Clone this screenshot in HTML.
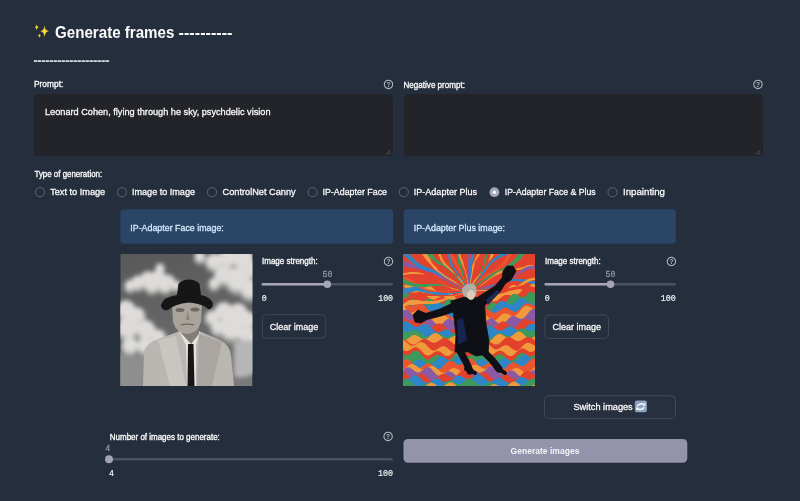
<!DOCTYPE html>
<html><head><meta charset="utf-8">
<style>
html,body{margin:0;padding:0;background:#252e3d;width:800px;height:501px;overflow:hidden}
svg{display:block;will-change:transform}
text{font-family:"Liberation Sans",sans-serif}
.lbl{font-size:8.7px;fill:#fafafa;stroke:#fafafa;stroke-width:0.32px}
.rad{font-size:9.6px;fill:#fafafa;stroke:#fafafa;stroke-width:0.28px}
.mono{font-family:"Liberation Mono",monospace}
</style></head>
<body>
<svg width="800" height="501" viewBox="0 0 800 501">
<defs>
  <g id="help"><circle cx="0" cy="0" r="4.2" fill="none" stroke="#b3b7c1" stroke-width="1.05"/><text x="0" y="2.4" text-anchor="middle" style="font-size:6.6px;font-weight:bold;fill:#b3b7c1">?</text></g>
</defs>
<rect width="800" height="501" fill="#252e3d"/>

<!-- title -->
<g fill="#f6d43e">
  <path d="M44.5 25 Q44.8 30.7 48.9 31.2 Q44.8 31.7 44.5 37.5 Q44.2 31.7 40.3 31.2 Q44.2 30.7 44.5 25Z"/>
  <path d="M36.7 24.3 Q36.9 27 38.6 27.3 Q36.9 27.6 36.7 30.2 Q36.5 27.6 34.8 27.3 Q36.5 27 36.7 24.3Z"/>
  <path d="M39.4 33.4 Q39.6 35.4 41.1 35.6 Q39.6 35.8 39.4 37.9 Q39.2 35.8 37.7 35.6 Q39.2 35.4 39.4 33.4Z"/>
</g>
<text x="55" y="38" textLength="119.4" lengthAdjust="spacingAndGlyphs" style="font-size:16px;font-weight:bold;fill:#fafafa">Generate frames</text>
<text x="178.6" y="38" textLength="53.9" lengthAdjust="spacingAndGlyphs" style="font-size:16px;font-weight:bold;fill:#fafafa">----------</text>
<rect x="33.9" y="60.2" width="75.4" height="1.8" fill="url(#dash)"/>
<defs><pattern id="dash" x="33.9" y="0" width="3.99" height="10" patternUnits="userSpaceOnUse"><rect x="0" y="0" width="3.4" height="10" fill="#d6d8de"/></pattern></defs>

<!-- prompt -->
<text class="lbl" x="34" y="87.4" textLength="29.3" lengthAdjust="spacingAndGlyphs">Prompt:</text>
<use href="#help" x="388.5" y="84.4"/>
<rect x="34" y="94" width="359" height="62" rx="4" fill="#232429"/>
<text class="rad" x="45" y="115" textLength="225.5" lengthAdjust="spacingAndGlyphs">Leonard Cohen, flying through he sky, psychdelic vision</text>
<path d="M386 154.5 L390.5 150 M388.5 154.5 L390.5 152.5" stroke="#6a6e78" stroke-width="0.7"/>

<text class="lbl" x="403.5" y="87.6" textLength="61.5" lengthAdjust="spacingAndGlyphs">Negative prompt:</text>
<use href="#help" x="758" y="84.4"/>
<rect x="404" y="94" width="359" height="62" rx="4" fill="#232429"/>
<path d="M756 154.5 L760.5 150 M758.5 154.5 L760.5 152.5" stroke="#6a6e78" stroke-width="0.7"/>

<!-- type of generation -->
<text class="lbl" x="34.5" y="177" textLength="67.7" lengthAdjust="spacingAndGlyphs">Type of generation:</text>
<g fill="none" stroke="#5d6373" stroke-width="1">
  <circle cx="40" cy="192.2" r="4.6"/>
  <circle cx="122" cy="192.2" r="4.6"/>
  <circle cx="212" cy="192.2" r="4.6"/>
  <circle cx="312.5" cy="192.2" r="4.6"/>
  <circle cx="403.8" cy="192.2" r="4.6"/>
  <circle cx="612.5" cy="192.2" r="4.6"/>
</g>
<circle cx="494.4" cy="192.2" r="4.9" fill="#a4a4ba"/>
<circle cx="494.4" cy="192.2" r="1.7" fill="#ffffff"/>
<text class="rad" x="50.2" y="195.3" textLength="55" lengthAdjust="spacingAndGlyphs">Text to Image</text>
<text class="rad" x="132" y="195.3" textLength="63" lengthAdjust="spacingAndGlyphs">Image to Image</text>
<text class="rad" x="222.5" y="195.3" textLength="73.2" lengthAdjust="spacingAndGlyphs">ControlNet Canny</text>
<text class="rad" x="322.5" y="195.3" textLength="64.5" lengthAdjust="spacingAndGlyphs">IP-Adapter Face</text>
<text class="rad" x="413.8" y="195.3" textLength="63.2" lengthAdjust="spacingAndGlyphs">IP-Adapter Plus</text>
<text class="rad" x="504.8" y="195.3" textLength="90.8" lengthAdjust="spacingAndGlyphs">IP-Adapter Face &amp; Plus</text>
<text class="rad" x="623" y="195.3" textLength="42" lengthAdjust="spacingAndGlyphs">Inpainting</text>

<!-- info boxes -->
<rect x="120.3" y="209.3" width="272.8" height="34.4" rx="3.5" fill="#2a4566"/>
<text x="130.3" y="230.5" textLength="93.5" lengthAdjust="spacingAndGlyphs" style="font-size:9.4px;fill:#d2ebfd;stroke:#d2ebfd;stroke-width:0.28px">IP-Adapter Face image:</text>
<rect x="403.8" y="209.3" width="272" height="34.4" rx="3.5" fill="#2a4566"/>
<text x="413.7" y="230.5" textLength="91.3" lengthAdjust="spacingAndGlyphs" style="font-size:9.4px;fill:#d2ebfd;stroke:#d2ebfd;stroke-width:0.28px">IP-Adapter Plus image:</text>

<!-- IMAGE 1 placeholder -->
<g id="img1">
  <clipPath id="c1"><rect x="120.3" y="254" width="132.2" height="132"/></clipPath>
  <filter id="blur1" x="-30%" y="-30%" width="160%" height="160%"><feGaussianBlur stdDeviation="2"/></filter>
  <filter id="blur2" x="-20%" y="-20%" width="140%" height="140%"><feGaussianBlur stdDeviation="0.6"/></filter>
  <linearGradient id="sky" x1="0" y1="0" x2="0.2" y2="1"><stop offset="0" stop-color="#595959"/><stop offset="0.6" stop-color="#666666"/><stop offset="1" stop-color="#7a7a7a"/></linearGradient>
  <g clip-path="url(#c1)">
    <rect x="120.3" y="254" width="132.2" height="132" fill="url(#sky)"/>
    <g filter="url(#blur1)">
      <g fill="#a0a09f"><circle cx="138" cy="285" r="7.6"/><circle cx="148" cy="282" r="9.0"/><circle cx="158" cy="281" r="9.0"/><circle cx="168" cy="284" r="7.6"/><circle cx="176" cy="288" r="5.2"/><circle cx="130" cy="288" r="6.0"/><circle cx="152" cy="288" r="7.6"/><circle cx="160" cy="271" r="5.2"/><circle cx="165" cy="288" r="7.6"/><circle cx="214" cy="264" r="9.0"/><circle cx="228" cy="260" r="10.6"/><circle cx="243" cy="261" r="12.0"/><circle cx="252" cy="272" r="9.0"/><circle cx="224" cy="277" r="10.6"/><circle cx="238" cy="282" r="13.6"/><circle cx="250" cy="292" r="10.6"/><circle cx="214" cy="286" r="6.0"/><circle cx="200" cy="259" r="6.0"/><circle cx="212" cy="320" r="7.6"/><circle cx="224" cy="314" r="10.6"/><circle cx="238" cy="315" r="10.6"/><circle cx="248" cy="322" r="9.0"/><circle cx="232" cy="330" r="13.6"/><circle cx="248" cy="338" r="10.6"/><circle cx="218" cy="330" r="7.6"/><circle cx="126" cy="312" r="10.6"/><circle cx="137" cy="318" r="9.0"/><circle cx="128" cy="330" r="12.0"/><circle cx="146" cy="332" r="10.6"/><circle cx="158" cy="340" r="9.0"/><circle cx="145" cy="348" r="9.0"/><circle cx="130" cy="348" r="9.0"/><circle cx="166" cy="348" r="7.6"/></g>
      <g fill="#dddcda"><circle cx="138" cy="282" r="6.6"/><circle cx="148" cy="279" r="7.8"/><circle cx="158" cy="278" r="7.8"/><circle cx="168" cy="281" r="6.6"/><circle cx="176" cy="285" r="4.5"/><circle cx="130" cy="285" r="5.2"/><circle cx="152" cy="285" r="6.6"/><circle cx="160" cy="268" r="4.5"/><circle cx="165" cy="285" r="6.6"/><circle cx="214" cy="261" r="7.8"/><circle cx="228" cy="257" r="9.0"/><circle cx="243" cy="258" r="10.4"/><circle cx="252" cy="269" r="7.8"/><circle cx="224" cy="274" r="9.0"/><circle cx="238" cy="279" r="11.6"/><circle cx="250" cy="289" r="9.0"/><circle cx="214" cy="283" r="5.2"/><circle cx="200" cy="256" r="5.2"/><circle cx="212" cy="317" r="6.6"/><circle cx="224" cy="311" r="9.0"/><circle cx="238" cy="312" r="9.0"/><circle cx="248" cy="319" r="7.8"/><circle cx="232" cy="327" r="11.6"/><circle cx="248" cy="335" r="9.0"/><circle cx="218" cy="327" r="6.6"/><circle cx="126" cy="309" r="9.0"/><circle cx="137" cy="315" r="7.8"/><circle cx="128" cy="327" r="10.4"/><circle cx="146" cy="329" r="9.0"/><circle cx="158" cy="337" r="7.8"/><circle cx="145" cy="345" r="7.8"/><circle cx="130" cy="345" r="7.8"/><circle cx="166" cy="345" r="6.6"/></g>
      <path d="M234 342 Q245 338 256 342 L256 372 Q245 380 234 376Z" fill="#b6b6b6"/>
      <path d="M116 352 Q130 358 146 356 L146 390 L116 390Z" fill="#8e8e8e"/>
    </g>
    <g filter="url(#blur2)">
      <!-- suit -->
      <path d="M143 386 L144 352 Q146 343 158 339 L180 331 L199 331 L220 340 Q230 345 231 356 L234 386 Z" fill="#bab6b1"/>
      <path d="M158 340 L176 336 L186 386 L170 386 Z" fill="#c9c5c0"/>
      <path d="M199 334 L222 342 L212 386 L197 386 Z" fill="#aaa5a0"/>
      <path d="M179 331 L186 345 L187 386 L196 386 L196 345 L200 332 Z" fill="#e6e4e0"/>
      <path d="M188 344 L193.5 344 L194.5 386 L187.5 386 Z" fill="#181818"/>
      <!-- neck / face -->
      <path d="M179 318 L199 318 L199 334 L191 344 L181 333 Z" fill="#857e78"/>
      <path d="M172 304 Q175 300 187 300 Q200 300 202 306 L201 322 Q198 333 187 334 Q176 333 173 322 Z" fill="#aaa39c"/>
      <ellipse cx="180" cy="310" rx="4.5" ry="2" fill="#6d6762"/><ellipse cx="195" cy="309.5" rx="4.5" ry="2" fill="#6d6762"/>
      <path d="M187.5 311 L186 320 L190 320Z" fill="#8a847e"/>
      <path d="M181 325 Q187 323 194 325" stroke="#5e5954" stroke-width="1.1" fill="none"/>
      
      
      <!-- hat -->
      <path d="M161 305 Q163 297 177 295 L178.5 284 Q182 279.5 189 279.5 Q196 279.5 199.5 284 L201 295 Q211 297 213 304 Q212 310 208 309 Q204 304 189 302.5 Q174 304 168 310 Q161 311 161 305 Z" fill="#141414"/>
    </g>
  </g>
</g>
<!-- IMAGE 2 placeholder -->
<g id="img2">
  <clipPath id="c2"><rect x="403" y="254" width="132" height="132"/></clipPath>
  <filter id="wav" x="0" y="0" width="1" height="1" filterUnits="objectBoundingBox"><feTurbulence type="fractalNoise" baseFrequency="0.03 0.045" numOctaves="3" seed="11" result="t"/><feDisplacementMap in="SourceGraphic" in2="t" scale="34" xChannelSelector="R" yChannelSelector="G"/></filter>
  <radialGradient id="rg" cx="468" cy="288" r="26" fx="468" fy="288" gradientUnits="userSpaceOnUse" spreadMethod="repeat" gradientTransform="translate(468 288) scale(1.1 0.9) translate(-468 -288)">
    <stop offset="0" stop-color="#e5402c"/><stop offset="0.22" stop-color="#e5402c"/>
    <stop offset="0.22" stop-color="#f0953a"/><stop offset="0.40" stop-color="#f0953a"/>
    <stop offset="0.40" stop-color="#e84a30"/><stop offset="0.52" stop-color="#e84a30"/>
    <stop offset="0.52" stop-color="#3b9a58"/><stop offset="0.64" stop-color="#3b9a58"/>
    <stop offset="0.64" stop-color="#2d84c4"/><stop offset="0.82" stop-color="#2d84c4"/>
    <stop offset="0.82" stop-color="#8658a2"/><stop offset="1" stop-color="#8658a2"/>
  </radialGradient>
  <g clip-path="url(#c2)">
    <g id="bands"><clipPath id="topc"><path d="M400 250 L540 250 L540 345 Q500 318 468 300 Q436 318 400 345Z"/></clipPath><rect x="403" y="254" width="132" height="132" fill="#e2412d"/>
<path d="M401 287.1L404 285.4L407 283.9L410 284.1L413 286.1L416 288.5L419 289.8L422 289.1L425 287.2L428 285.8L431 286.3L434 288.7L437 291.8L440 293.9L443 294.1L446 293.1L449 292.6L452 293.8L455 296.9L458 300.4L461 302.6L464 302.6L467 301.3L470 299.2L473 298.3L476 299.0L479 300.1L482 299.8L485 297.5L488 293.9L491 290.9L494 289.7L497 290.4L500 291.7L503 291.8L506 290.0L509 287.3L512 285.1L515 284.9L518 286.5L521 288.6L524 289.3L527 288.0L530 285.4L533 283.2L536 282.8L538 390L401 390Z" fill="#f09a3c"/>
<path d="M401 284.6L404 286.6L407 289.5L410 292.0L413 292.8L416 292.4L419 291.7L422 292.3L425 294.4L428 297.2L431 299.3L434 299.7L437 298.5L440 297.2L443 297.0L446 298.4L449 300.5L452 302.0L455 301.9L458 300.5L461 299.2L464 299.2L467 301.0L470 302.8L473 303.5L476 302.8L479 300.7L482 298.7L485 298.1L488 299.0L491 300.6L494 301.5L497 300.7L500 298.4L503 295.9L506 294.7L509 294.9L512 295.8L515 295.9L518 294.3L521 291.4L524 288.5L527 287.0L530 287.2L533 288.2L536 288.6L538 390L401 390Z" fill="#e2412d"/>
<path d="M401 295.5L404 294.0L407 293.2L410 294.7L413 298.3L416 302.1L419 304.0L422 303.1L425 300.5L428 298.7L431 299.1L434 301.5L437 304.3L440 305.2L443 303.5L446 300.7L449 298.8L452 299.5L455 302.6L458 306.1L461 308.0L464 307.5L467 305.8L470 304.2L473 304.7L476 307.3L479 310.1L482 310.8L485 308.9L488 305.6L491 302.9L494 302.6L497 304.1L500 305.7L503 305.3L506 302.2L509 297.9L512 294.6L515 293.8L518 295.3L521 297.0L524 297.0L527 294.7L530 291.3L533 289.2L536 289.6L538 390L401 390Z" fill="#3d9a5a"/>
<path d="M401 301.0L404 304.0L407 305.3L410 304.2L413 301.8L416 300.1L419 300.4L422 302.5L425 304.9L428 305.8L431 304.5L434 302.2L437 300.9L440 301.9L443 304.9L446 308.3L449 310.1L452 309.8L455 308.5L458 308.0L461 309.6L464 313.0L467 316.3L470 317.1L473 315.1L476 311.8L479 309.3L482 308.7L485 309.9L488 311.0L491 310.5L494 307.7L497 304.0L500 301.2L503 300.8L506 302.3L509 304.0L512 304.2L515 302.4L518 299.6L521 298.0L524 298.5L527 300.9L530 303.2L533 303.8L536 302.0L538 390L401 390Z" fill="#2e86c6"/>
<path d="M401 299.1L404 300.7L407 303.4L410 305.5L413 305.6L416 304.1L419 302.8L422 303.2L425 305.9L428 309.5L431 312.2L434 312.8L437 311.6L440 310.3L443 310.5L446 312.7L449 315.6L452 317.4L455 317.0L458 314.8L461 312.6L464 312.0L467 313.5L470 315.3L473 315.8L476 314.3L479 311.3L482 308.6L485 307.7L488 309.1L491 311.5L494 312.9L497 312.3L500 310.1L503 307.9L506 307.5L509 308.9L512 311.1L515 312.1L518 310.8L521 307.7L524 304.6L527 303.2L530 303.8L533 305.1L536 305.3L538 390L401 390Z" fill="#ea5530"/>
<path d="M401 303.6L404 306.5L407 310.1L410 312.4L413 312.4L416 310.9L419 310.0L422 311.0L425 314.1L428 317.5L431 319.3L434 318.6L437 316.3L440 314.3L443 314.3L446 316.3L449 318.8L452 319.8L455 318.4L458 315.7L461 313.8L464 314.1L467 316.7L470 319.2L473 320.1L476 318.8L479 316.2L482 314.2L485 314.5L488 316.9L491 319.6L494 320.6L497 319.2L500 316.2L503 313.7L506 313.2L509 314.5L512 316.2L515 316.1L518 313.6L521 309.8L524 306.6L527 305.8L530 307.1L533 308.8L536 309.2L538 390L401 390Z" fill="#f09a3c"/>
<path d="M401 312.4L404 310.2L407 309.6L410 311.5L413 315.3L416 318.7L419 320.2L422 319.2L425 317.5L428 316.9L431 318.7L434 321.9L437 324.6L440 325.0L443 323.0L446 320.1L449 318.5L452 319.3L455 321.7L458 323.9L461 324.0L464 321.9L467 319.4L470 317.8L473 318.6L476 321.2L479 323.5L482 323.8L485 321.9L488 319.4L491 318.3L494 319.6L497 322.3L500 324.5L503 324.2L506 321.6L509 318.2L512 316.1L515 316.3L518 317.9L521 319.0L524 317.9L527 314.6L530 310.8L533 308.7L536 309.2L538 390L401 390Z" fill="#8a5aa5"/>
<path d="M401 314.8L404 317.3L407 319.8L410 320.5L413 319.3L416 317.3L419 316.6L422 318.2L425 321.7L428 325.1L431 326.6L434 325.7L437 324.0L440 323.3L443 324.6L446 327.6L449 330.1L452 330.5L455 328.6L458 325.8L461 324.1L464 324.7L467 327.0L470 328.6L473 328.0L476 325.5L479 322.3L482 320.5L485 321.2L488 323.7L491 326.0L494 326.5L497 324.9L500 322.5L503 321.3L506 322.3L509 324.9L512 326.9L515 326.8L518 324.4L521 321.1L524 318.9L527 318.9L530 320.4L533 321.6L536 320.7L538 390L401 390Z" fill="#e2412d"/>
<path d="M401 323.3L404 321.3L407 321.3L410 323.2L413 325.6L416 326.9L419 326.2L422 324.4L425 323.4L428 324.4L431 327.2L434 330.4L437 332.3L440 332.0L443 330.4L446 329.3L449 329.9L452 332.2L455 334.7L458 335.6L461 334.3L464 331.7L467 329.8L470 329.3L473 330.4L476 331.8L479 331.9L482 330.1L485 327.3L488 325.3L491 325.4L494 327.5L497 329.8L500 330.8L503 329.8L506 327.7L509 326.2L512 326.6L515 328.6L518 330.6L521 331.1L524 329.3L527 326.3L530 323.9L533 323.4L536 324.5L538 390L401 390Z" fill="#2e86c6"/>
<path d="M401 329.1L404 331.4L407 332.3L410 331.5L413 330.3L416 330.1L419 331.6L422 334.2L425 336.5L428 337.0L431 335.7L434 333.9L437 332.9L440 333.7L443 335.5L446 337.0L449 336.8L452 335.0L455 332.9L458 331.9L461 332.8L464 335.0L467 337.0L470 337.1L473 335.5L476 333.6L479 332.9L482 334.0L485 336.2L488 338.0L491 338.1L494 336.5L497 334.4L500 333.2L503 333.8L506 335.3L509 336.2L512 335.5L515 333.1L518 330.3L521 328.6L524 328.8L527 330.2L530 331.2L533 330.7L536 328.8L538 390L401 390Z" fill="#3d9a5a"/>
<path d="M401 338.9L404 340.3L407 339.4L410 337.0L413 335.0L416 334.9L419 336.7L422 338.8L425 339.4L428 337.8L431 335.0L434 332.9L437 333.0L440 335.2L443 337.9L446 339.4L449 338.7L452 336.9L455 335.8L458 336.9L461 339.9L464 343.2L467 344.9L470 343.9L473 341.3L476 339.3L479 339.1L482 340.8L485 342.6L488 342.7L491 340.5L494 337.1L497 334.4L500 333.8L503 335.3L506 337.1L509 337.6L512 335.9L515 333.3L518 331.6L521 332.1L524 334.6L527 337.4L530 338.6L533 337.5L536 335.2L538 390L401 390Z" fill="#f09a3c"/>
<path d="M401 338.8L404 339.0L407 340.9L410 343.5L413 344.8L416 344.1L419 341.8L422 339.6L425 338.9L428 340.1L431 342.0L434 343.0L437 342.1L440 339.9L443 338.0L446 337.9L449 339.9L452 342.6L455 344.5L458 344.4L461 343.0L464 341.9L467 342.4L470 344.4L473 346.8L476 348.0L479 347.1L482 344.7L485 342.4L488 341.6L491 342.6L494 344.2L497 344.5L500 343.0L503 340.1L506 337.6L509 336.9L512 338.2L515 340.2L518 341.2L521 340.4L524 338.4L527 336.9L530 337.1L533 339.1L536 341.7L538 390L401 390Z" fill="#e2412d"/>
<path d="M401 339.7L404 340.3L407 342.8L410 345.2L413 345.9L416 344.5L419 342.5L422 341.9L425 343.6L428 346.8L431 349.8L434 350.7L437 349.4L440 347.2L443 346.1L446 347.1L449 349.5L452 351.4L455 351.3L458 348.9L461 345.8L464 344.0L467 344.5L470 346.5L473 348.2L476 348.0L479 345.9L482 343.3L485 342.1L488 343.5L491 346.4L494 349.0L497 349.6L500 348.1L503 345.9L506 345.0L509 346.2L512 348.7L515 350.6L518 350.4L521 347.8L524 344.6L527 342.7L530 343.0L533 344.7L536 346.1L538 390L401 390Z" fill="#f09a3c"/>
<path d="M401 348.0L404 350.5L407 351.3L410 350.1L413 348.0L416 347.1L419 348.5L422 351.6L425 354.7L428 355.8L431 354.6L434 352.3L437 350.9L440 351.6L443 353.9L446 355.9L449 355.9L452 353.6L455 350.5L458 348.4L461 348.7L464 350.7L467 352.7L470 352.9L473 351.0L476 348.5L479 347.2L482 348.3L485 351.3L488 354.0L491 355.0L494 353.7L497 351.5L500 350.4L503 351.5L506 354.0L509 356.1L512 356.1L515 353.8L518 350.6L521 348.5L524 348.6L527 350.4L530 351.9L533 351.5L536 349.2L538 390L401 390Z" fill="#e2412d"/>
<path d="M401 352.3L404 354.8L407 355.5L410 353.9L413 351.6L416 350.5L419 352.0L422 355.4L425 358.7L428 359.8L431 358.5L434 356.1L437 354.7L440 355.6L443 358.1L446 360.3L449 360.3L452 357.8L455 354.3L458 352.1L461 352.3L464 354.4L467 356.5L470 356.5L473 354.3L476 351.5L479 350.1L482 351.4L485 354.6L488 357.6L491 358.5L494 357.2L497 354.9L500 353.9L503 355.3L506 358.2L509 360.6L512 360.7L515 358.3L518 355.0L521 352.9L524 353.2L527 355.1L530 356.8L533 356.3L536 353.6L538 390L401 390Z" fill="#3d9a5a"/>
<path d="M401 356.7L404 359.9L407 363.0L410 364.2L413 363.0L416 360.6L419 359.2L422 360.0L425 362.4L428 364.6L431 364.6L434 362.3L437 358.8L440 356.5L443 356.6L446 358.5L449 360.5L452 360.6L455 358.6L458 355.8L461 354.4L464 355.5L467 358.6L470 361.6L473 362.7L476 361.5L479 359.4L482 358.4L485 359.7L488 362.6L491 365.1L494 365.4L497 363.2L500 360.0L503 358.0L506 358.2L509 360.2L512 361.8L515 361.5L518 359.0L521 355.9L524 354.2L527 355.1L530 357.8L533 360.5L536 361.2L538 390L401 390Z" fill="#2e86c6"/>
<path d="M401 362.8L404 360.3L407 359.1L410 360.4L413 363.6L416 366.8L419 368.0L422 366.8L425 364.5L428 363.1L431 364.0L434 366.6L437 368.8L440 368.9L443 366.5L446 363.1L449 360.8L452 360.9L455 362.8L458 364.7L461 364.7L464 362.6L467 359.7L470 358.2L473 359.3L476 362.4L479 365.4L482 366.4L485 365.2L488 363.1L491 362.2L494 363.5L497 366.5L500 369.1L503 369.5L506 367.4L509 364.2L512 362.2L515 362.5L518 364.5L521 366.2L524 365.8L527 363.3L530 360.0L533 358.2L536 359.1L538 390L401 390Z" fill="#ea5530"/>
<path d="M401 370.6L404 369.2L407 366.5L410 364.3L413 363.9L416 365.5L419 367.9L422 369.4L425 368.9L428 367.2L431 365.8L434 366.2L437 368.5L440 371.3L443 372.9L446 372.3L449 370.2L452 368.2L455 368.0L458 369.4L461 371.3L464 371.9L467 370.4L470 367.5L473 365.1L476 364.5L479 366.0L482 368.0L485 369.0L488 368.1L491 366.1L494 364.6L497 365.0L500 367.3L503 370.2L506 371.8L509 371.3L512 369.5L515 368.0L518 368.2L521 370.0L524 372.2L527 372.9L530 371.5L533 368.7L536 366.3L538 390L401 390Z" fill="#f09a3c"/>
<path d="M401 372.9L404 369.4L407 367.2L410 367.5L413 369.8L416 372.0L419 372.4L422 370.6L425 368.2L428 367.1L431 368.6L434 372.0L437 375.1L440 376.1L443 374.7L446 372.3L449 371.1L452 372.2L455 374.8L458 376.9L461 376.8L464 374.2L467 370.8L470 368.6L473 368.9L476 371.0L479 372.8L482 372.6L485 370.3L488 367.5L491 366.2L494 367.5L497 370.7L500 373.6L503 374.5L506 373.1L509 371.0L512 370.2L515 371.8L518 374.8L521 377.3L524 377.4L527 375.1L530 372.0L533 370.1L536 370.6L538 390L401 390Z" fill="#8a5aa5"/>
<path d="M401 369.7L404 371.3L407 374.3L410 376.8L413 377.2L416 375.6L419 373.8L422 373.4L425 375.3L428 378.3L431 380.4L434 380.2L437 377.8L440 375.0L443 373.7L446 374.5L449 376.5L452 377.7L455 376.8L458 374.0L461 371.0L464 369.8L467 371.1L470 373.8L473 375.8L476 375.9L479 374.1L482 372.2L485 372.0L488 374.1L491 377.4L494 379.8L497 379.8L500 377.7L503 375.4L506 374.5L509 375.7L512 378.0L515 379.2L518 378.2L521 375.2L524 372.1L527 370.8L530 371.8L533 374.1L536 375.7L538 390L401 390Z" fill="#e2412d"/>
<path d="M401 377.1L404 379.0L407 379.3L410 377.8L413 375.8L416 375.2L419 376.7L422 379.7L425 382.2L428 382.8L431 381.4L434 379.2L437 378.2L440 379.2L443 381.4L446 383.0L449 382.5L452 380.1L455 377.1L458 375.4L461 375.9L464 377.8L467 379.4L470 379.2L473 377.2L476 374.9L479 374.1L482 375.6L485 378.5L488 380.9L491 381.5L494 380.2L497 378.3L500 377.8L503 379.2L506 381.7L509 383.6L512 383.4L515 381.1L518 378.3L521 376.8L524 377.4L527 379.2L530 380.4L533 379.8L536 377.4L538 390L401 390Z" fill="#2e86c6"/>
<path d="M401 382.1L404 379.9L407 379.2L410 380.8L413 383.8L416 386.5L419 387.2L422 385.8L425 383.7L428 382.7L431 383.9L434 386.2L437 388.0L440 387.7L443 385.2L446 382.1L449 380.4L452 380.8L455 382.7L458 384.3L461 383.9L464 381.8L467 379.3L470 378.3L473 379.7L476 382.6L479 385.2L482 385.7L485 384.4L488 382.5L491 382.0L494 383.6L497 386.3L500 388.4L503 388.3L506 386.0L509 383.2L512 381.7L515 382.3L518 384.2L521 385.5L524 384.8L527 382.3L530 379.4L533 378.2L536 379.4L538 390L401 390Z" fill="#3d9a5a"/>
<path d="M401 391.0L404 389.1L407 386.9L410 386.1L413 387.3L416 389.5L419 390.7L422 389.8L425 386.9L428 383.9L431 382.6L434 383.6L437 385.7L440 387.2L443 386.7L446 384.5L449 382.5L452 382.2L455 384.2L458 387.4L461 389.6L464 389.8L467 388.1L470 386.2L473 385.9L476 387.6L479 390.2L482 391.7L485 390.8L488 388.1L491 385.2L494 384.0L497 385.0L500 386.9L503 388.0L506 387.0L509 384.4L512 382.0L515 381.5L518 383.3L521 386.2L524 388.3L527 388.3L530 386.6L533 384.9L536 385.0L538 390L401 390Z" fill="#f09a3c"/>
<path d="M401 391.1L404 390.6L407 388.5L410 386.3L413 385.5L416 386.8L419 389.3L422 391.4L425 391.7L428 390.4L431 388.8L434 388.5L437 390.1L440 392.7L443 394.5L446 394.3L449 392.3L452 390.0L455 388.9L458 389.6L461 391.3L464 392.3L467 391.5L470 389.1L473 386.6L476 385.6L479 386.7L482 388.9L485 390.6L488 390.6L491 389.1L494 387.5L497 387.3L500 389.1L503 391.9L506 393.9L509 393.9L512 392.2L515 390.2L518 389.5L521 390.6L524 392.5L527 393.6L530 392.7L533 390.2L536 387.6L538 390L401 390Z" fill="#e2412d"/>
<g clip-path="url(#topc)"><path d="M462 294L458 295L453 297L448 299L444 301L439 303L434 304L429 304L424 304L419 304L413 305L408 305L404 307L399 309L395 313L391 317L387 320L383 324L378 326L373 327L368 327L362 325L356 323L351 321L345 320L340 320L335 323L331 327L328 332L324 338L321 344L317 348L313 351L309 339L313 336L317 332L321 326L325 321L329 316L333 312L338 310L343 310L349 312L354 314L360 317L365 319L371 320L376 319L380 317L385 314L389 310L393 307L398 304L403 302L408 300L413 300L418 300L423 301L428 301L433 301L438 300L443 299L448 298L453 296L457 294L462 293Z" fill="#f09a3c"/>
<path d="M462 293L457 295L452 296L447 296L442 297L437 296L432 296L427 296L422 296L417 297L412 299L408 301L403 304L399 307L394 310L389 311L384 312L379 311L374 309L368 306L363 304L357 302L352 302L348 304L343 307L338 312L334 317L330 322L326 326L321 328L316 328L311 325L305 321L303 310L309 315L314 318L319 318L324 317L329 313L333 308L337 303L342 298L347 295L352 294L357 295L362 297L367 300L373 303L378 305L383 306L388 306L393 305L398 302L402 300L407 297L412 295L417 293L422 293L427 293L432 294L437 294L442 295L447 295L452 295L457 294L462 293Z" fill="#e2412d"/>
<path d="M462 293L457 293L452 294L447 295L442 295L437 295L432 294L427 293L422 292L417 291L412 292L407 293L402 295L397 297L392 300L388 302L383 303L378 303L373 302L367 300L362 297L357 294L352 292L347 291L342 291L337 294L332 297L327 302L323 307L318 310L313 312L308 312L303 310L302 296L307 299L312 300L317 298L322 295L327 291L332 286L337 283L342 281L348 281L352 282L357 285L362 288L367 292L372 295L377 296L382 296L387 295L392 293L397 291L402 289L407 288L412 287L417 287L422 288L427 289L432 291L437 292L442 293L447 293L452 293L457 292L462 292Z" fill="#2e86c6"/>
<path d="M462 291L457 291L452 291L447 291L442 292L437 292L432 292L427 291L422 289L417 286L413 284L408 281L403 280L398 279L393 280L388 283L382 286L377 289L372 292L367 293L362 292L357 289L352 284L348 279L343 273L339 269L334 267L329 267L324 270L318 275L312 282L307 288L302 292L302 284L307 280L313 274L319 268L325 263L331 261L336 260L340 263L344 267L348 273L353 279L357 284L362 287L367 288L372 287L377 285L383 282L388 279L393 277L399 276L404 277L409 278L413 281L418 284L422 287L427 289L432 290L437 291L442 291L447 290L452 290L457 290L462 291Z" fill="#ea5530"/>
<path d="M462 291L457 289L452 288L448 287L443 286L438 286L432 286L427 287L422 287L417 287L412 286L407 285L403 282L398 279L394 276L389 273L384 272L379 271L374 272L369 273L363 276L358 278L353 280L348 280L343 279L338 276L334 272L329 266L325 261L321 257L316 255L311 255L306 257L308 247L314 245L319 246L323 248L327 253L331 258L335 263L339 268L344 271L349 273L354 273L359 271L365 269L370 267L376 266L381 265L386 266L390 269L395 272L399 275L403 278L408 281L413 283L418 284L423 284L428 284L433 284L438 284L443 285L448 286L453 287L457 289L462 290Z" fill="#3d9a5a"/>
<path d="M462 291L457 290L452 289L448 287L443 285L439 282L434 280L430 277L425 275L420 274L415 274L410 274L404 275L399 276L394 276L389 275L384 273L380 270L376 265L372 260L368 256L364 252L360 250L354 250L349 252L343 254L336 258L331 260L325 262L320 261L316 258L312 252L309 245L310 240L313 247L317 252L321 256L326 257L332 255L338 253L344 250L350 247L356 246L361 246L366 249L370 252L373 257L377 262L381 267L385 270L389 273L394 274L399 274L405 273L410 272L416 272L421 273L426 274L430 276L435 279L439 281L443 284L448 286L453 288L457 289L462 291Z" fill="#f09a3c"/>
<path d="M462 290L457 289L453 288L448 287L443 285L438 283L434 281L430 278L425 275L421 272L417 269L412 268L407 268L401 268L395 269L390 270L385 271L380 270L375 267L371 263L367 258L364 253L361 248L357 244L353 241L347 241L341 242L335 245L329 249L322 252L317 253L312 253L308 249L311 239L315 242L320 243L325 242L332 240L338 236L345 234L351 233L356 234L360 236L364 241L367 246L370 252L373 257L377 261L381 264L386 265L392 265L397 265L403 264L408 264L414 264L418 266L423 269L427 272L431 275L435 278L439 281L443 284L448 286L453 287L458 288L462 290Z" fill="#e2412d"/>
<path d="M462 290L458 288L453 285L449 283L445 280L440 278L436 275L432 273L427 272L422 270L417 269L412 268L407 267L402 266L398 264L393 261L389 257L386 253L382 249L378 246L374 243L369 241L364 241L358 241L353 241L347 242L342 241L337 240L333 237L329 233L326 228L323 223L319 218L325 208L328 213L330 218L333 224L337 228L341 231L346 233L351 233L357 233L362 233L368 233L373 234L378 237L382 240L385 243L389 247L392 252L396 255L400 259L404 261L409 263L414 265L419 266L423 267L428 269L433 271L437 273L442 276L446 279L450 282L454 284L458 287L463 289Z" fill="#8a5aa5"/>
<path d="M463 289L459 286L455 283L450 280L446 278L442 276L437 274L432 272L427 271L422 269L418 267L414 264L410 261L406 257L403 253L400 249L396 245L392 242L387 240L382 239L377 238L371 239L365 239L360 238L355 236L351 233L348 228L345 222L343 216L341 211L338 206L334 203L329 202L335 192L340 194L344 198L347 202L349 208L350 214L353 220L356 225L359 228L364 231L369 232L375 232L380 232L386 233L391 234L396 237L400 240L403 244L406 248L409 253L412 257L416 261L420 264L424 266L429 268L434 270L438 272L443 274L447 276L451 279L455 282L459 285L463 289Z" fill="#2e86c6"/>
<path d="M463 288L459 285L455 283L450 280L446 278L442 275L438 272L434 269L431 265L427 261L424 257L421 253L418 249L413 247L408 245L403 244L398 243L392 242L387 240L383 238L379 234L376 230L374 224L372 218L370 213L367 208L364 204L359 202L353 202L347 202L340 203L334 203L328 203L334 194L340 195L346 195L353 194L359 194L365 195L370 198L373 202L375 207L377 212L378 218L380 224L383 229L386 233L391 235L395 237L401 238L406 240L412 241L416 243L420 246L424 250L427 254L430 258L432 263L436 267L439 271L443 274L447 277L451 279L456 282L460 285L464 288Z" fill="#f09a3c"/>
<path d="M463 288L459 285L456 282L452 279L448 275L445 271L442 267L439 263L436 259L432 256L428 253L423 251L418 249L413 247L409 245L404 242L401 238L398 234L396 229L394 223L392 218L390 213L387 209L383 206L378 204L372 203L365 203L359 202L354 201L350 198L346 194L345 189L344 182L350 176L350 182L352 188L355 192L359 195L364 196L370 197L377 198L383 199L388 201L392 205L395 209L397 214L398 219L399 225L401 230L404 235L407 238L411 241L416 244L421 246L426 248L430 251L434 254L438 257L441 261L444 265L446 270L449 274L453 278L456 281L460 285L464 288Z" fill="#e2412d"/>
<path d="M464 287L461 283L458 280L455 276L451 272L447 269L443 266L438 264L434 261L430 258L427 254L424 250L422 245L420 239L419 234L417 229L414 225L410 222L405 219L400 218L393 217L388 215L382 214L378 211L375 207L374 201L373 194L373 187L373 181L372 175L370 171L366 168L359 166L369 159L375 161L379 164L381 168L382 174L381 181L381 188L381 194L382 200L384 204L388 208L393 210L399 211L405 213L411 215L415 218L419 221L421 226L423 231L424 236L426 241L427 247L430 251L433 255L436 259L440 262L445 265L449 268L453 271L456 275L459 279L462 283L464 287Z" fill="#3d9a5a"/>
<path d="M465 287L462 283L459 279L456 275L452 272L448 268L444 265L441 261L439 256L437 251L436 246L435 241L434 236L432 231L429 227L425 223L420 221L414 219L408 217L403 215L399 212L396 208L395 202L395 196L396 189L397 182L398 176L396 171L393 167L387 164L380 163L372 163L364 163L371 157L379 158L387 159L394 160L399 163L403 167L404 172L403 178L401 185L400 192L399 198L400 204L403 208L407 212L412 214L418 216L423 219L428 221L432 225L435 229L437 234L438 239L438 245L439 250L441 255L443 260L446 264L449 267L453 271L456 275L460 278L463 282L465 287Z" fill="#f09a3c"/>
<path d="M465 287L462 283L459 279L456 275L453 271L451 266L449 262L447 257L446 251L445 246L443 242L441 237L437 234L433 230L428 227L423 225L418 222L415 218L412 214L411 208L411 202L412 196L413 190L414 184L413 179L410 175L405 172L398 169L391 168L384 166L378 165L374 161L372 157L378 153L380 157L384 161L390 163L397 165L404 166L410 169L415 172L418 176L418 182L418 187L417 194L415 200L415 206L416 211L418 216L422 220L426 223L431 226L436 229L440 232L443 236L446 241L447 245L448 251L449 256L450 261L452 266L454 270L456 274L459 279L462 283L465 287Z" fill="#e2412d"/>
<path d="M465 287L463 282L460 278L457 274L454 270L451 266L449 261L448 256L447 251L446 246L446 241L445 236L443 231L440 227L436 223L431 220L426 217L421 214L417 211L414 207L413 202L413 196L415 189L417 182L418 176L419 171L417 166L413 162L407 159L399 158L391 156L384 154L379 152L387 147L392 150L398 152L406 154L414 157L420 160L423 164L425 168L424 174L422 180L420 186L418 193L417 199L418 204L421 208L425 212L430 215L435 218L440 221L444 225L446 230L448 234L449 239L449 245L449 250L450 255L451 260L453 265L455 269L458 273L461 278L464 282L466 286Z" fill="#2e86c6"/>
<path d="M466 286L464 282L462 277L460 273L457 268L455 264L452 260L450 255L448 251L446 246L446 241L445 235L445 230L444 225L443 220L441 216L438 212L434 208L429 204L425 201L421 197L418 193L417 188L417 182L418 176L419 170L421 164L421 159L420 154L417 150L413 146L407 143L400 140L412 136L419 139L424 142L429 146L431 151L432 156L431 161L429 167L427 173L425 179L425 184L426 189L428 194L432 198L436 202L440 205L444 209L447 214L449 218L450 223L450 229L450 234L450 239L450 244L451 249L452 254L455 259L457 263L459 267L462 272L464 277L465 281L466 286Z" fill="#ea5530"/>
<path d="M466 286L465 282L463 277L461 272L460 267L458 263L458 257L457 252L457 247L457 242L456 237L455 232L452 228L449 223L446 219L443 215L440 211L438 206L437 201L437 196L438 190L439 185L441 179L442 174L441 169L439 164L436 160L431 156L426 152L421 149L417 145L415 140L414 135L427 131L427 136L429 141L432 145L437 149L442 153L446 158L449 162L451 167L451 172L450 177L448 183L446 188L445 194L444 199L445 204L446 209L449 213L452 218L455 222L457 227L459 232L460 237L461 242L461 247L461 252L460 257L461 262L462 267L463 272L464 277L465 281L467 286Z" fill="#3d9a5a"/>
<path d="M468 286L467 281L466 276L465 271L463 267L461 262L459 257L458 252L457 247L458 242L459 237L460 231L462 226L463 221L462 216L461 211L458 207L453 202L449 198L445 194L442 189L440 185L441 179L443 174L447 168L451 162L455 157L457 151L457 146L454 142L449 137L442 133L435 129L445 128L452 132L458 136L463 141L466 146L466 151L464 156L459 161L455 167L451 172L448 178L447 183L448 188L451 192L455 197L459 201L463 206L466 211L467 216L467 221L466 226L464 231L462 236L461 242L460 247L460 252L461 257L463 261L464 266L466 271L467 276L468 281L468 286Z" fill="#f09a3c"/>
<path d="M468 286L468 281L467 276L466 271L465 266L464 261L463 256L464 251L465 246L466 241L468 236L470 231L471 226L471 221L470 216L468 211L464 206L460 201L457 197L455 192L455 187L456 182L460 176L464 171L469 166L473 161L475 156L475 151L472 146L467 141L461 136L454 132L449 127L456 126L461 131L468 136L474 141L478 146L481 152L481 157L478 161L474 166L469 171L465 176L461 181L459 186L459 191L461 196L464 201L468 206L471 211L473 216L474 221L474 226L473 231L471 236L468 241L467 246L465 251L465 256L465 261L466 266L467 271L468 276L468 281L468 286Z" fill="#e2412d"/>
<path d="M468 286L468 281L468 276L468 271L467 266L467 261L468 256L468 251L470 246L471 241L472 236L473 231L474 226L473 221L472 216L471 211L469 206L467 201L466 196L466 191L467 186L469 181L472 176L475 171L478 166L480 162L480 157L479 151L476 146L473 141L469 136L466 131L464 126L477 126L478 131L481 137L484 142L487 147L489 153L490 158L490 163L487 168L484 172L481 177L478 181L475 186L474 191L473 196L474 201L475 206L477 211L478 217L479 222L479 227L478 232L477 237L475 241L473 246L472 251L470 256L470 261L469 266L469 271L469 276L469 281L469 286Z" fill="#8a5aa5"/>
<path d="M469 286L470 281L470 276L470 271L470 266L470 261L471 256L472 251L473 246L475 242L478 237L480 232L482 227L483 223L483 217L482 212L480 207L478 202L476 196L476 191L476 186L478 181L481 177L485 172L490 168L493 163L496 159L497 154L496 149L493 143L490 138L486 132L482 127L495 128L498 134L501 140L504 145L507 151L507 157L506 161L503 166L499 170L494 174L490 178L486 183L484 187L483 192L484 197L485 203L486 208L488 213L488 219L488 224L486 229L484 233L482 238L479 242L477 247L475 252L473 256L473 261L472 266L472 271L471 276L471 281L470 286Z" fill="#2e86c6"/>
<path d="M470 286L470 281L471 276L472 271L472 266L474 262L476 257L479 252L482 248L485 244L487 240L489 235L490 230L489 224L488 219L486 213L484 208L483 202L484 197L487 193L491 189L497 185L503 181L508 178L512 174L514 169L513 164L510 157L506 151L501 145L497 139L495 133L496 128L505 130L504 135L506 141L509 147L514 153L518 160L520 166L520 172L518 177L514 180L509 183L503 187L497 190L492 194L489 198L488 203L489 209L490 214L492 220L493 226L493 231L492 236L490 241L487 245L484 249L481 253L478 257L475 262L474 267L473 272L472 276L471 281L470 286Z" fill="#f09a3c"/>
<path d="M470 286L472 282L475 278L477 273L479 268L481 264L481 259L482 253L482 248L482 243L482 238L484 233L487 229L491 225L496 221L500 218L505 214L507 210L509 205L509 200L507 193L505 187L502 181L500 175L501 170L503 166L508 162L514 159L521 156L529 154L534 151L538 147L539 142L544 144L543 150L539 153L533 156L526 158L519 160L512 163L507 167L505 171L504 177L506 182L508 189L511 195L512 201L512 207L510 211L507 215L503 219L498 222L493 226L489 230L486 234L484 238L483 243L483 249L483 254L482 259L482 264L480 269L478 273L475 278L473 282L470 286Z" fill="#e2412d"/>
<path d="M471 287L473 282L476 278L479 274L481 270L483 265L484 260L485 255L485 249L486 244L487 239L489 235L492 231L497 227L502 224L507 221L511 218L514 214L516 209L516 203L515 197L513 190L511 184L510 178L510 173L513 169L519 166L526 163L533 161L541 160L546 157L550 154L551 148L559 153L558 158L554 162L548 164L541 165L533 167L526 169L520 172L517 176L516 181L517 187L518 193L520 200L521 206L521 212L519 216L515 220L511 223L506 226L501 229L496 232L492 236L490 240L488 245L487 250L487 256L486 261L484 266L482 270L480 275L477 279L474 283L471 287Z" fill="#3d9a5a"/>
<path d="M471 287L473 282L476 278L480 274L483 270L485 266L488 262L490 257L491 252L492 247L493 242L494 237L496 232L499 228L503 225L508 222L513 219L518 216L522 213L525 209L526 203L526 198L525 191L524 185L523 179L523 173L525 169L530 165L535 163L543 161L550 159L556 157L561 155L571 162L566 164L559 165L552 166L545 168L539 170L534 173L532 178L531 183L532 189L533 196L533 202L533 208L531 213L528 217L523 220L518 222L513 225L508 227L503 230L500 234L498 239L496 244L495 249L494 254L492 259L490 263L487 268L484 272L481 275L477 279L474 283L471 287Z" fill="#f09a3c"/>
<path d="M472 287L475 283L477 279L480 275L482 270L485 266L488 262L492 258L496 255L500 252L504 249L507 245L511 242L513 237L515 232L516 227L518 222L519 217L521 212L523 208L527 204L532 201L537 199L543 197L548 195L553 192L556 188L558 183L558 177L558 171L558 164L558 158L559 153L566 158L564 163L564 169L564 175L564 182L563 188L561 193L557 196L553 199L548 201L542 203L536 205L532 207L528 210L525 214L523 219L521 224L520 230L518 235L516 239L513 244L510 247L506 251L502 254L497 257L493 260L490 263L486 267L483 271L481 275L478 279L475 284L472 287Z" fill="#e2412d"/>
<path d="M472 288L475 284L478 280L481 275L483 271L486 267L489 263L493 259L497 256L501 254L506 251L511 249L515 246L518 242L521 237L522 232L523 226L524 220L524 214L526 210L530 206L535 203L541 202L548 201L554 200L560 199L565 197L568 193L569 187L569 180L568 172L566 164L566 158L574 164L574 171L575 179L576 187L576 194L574 199L571 203L566 205L560 206L553 206L546 206L540 208L535 210L532 213L529 218L528 224L527 230L526 236L524 241L522 245L518 249L514 252L509 254L504 256L499 258L495 261L491 264L488 268L485 272L482 276L479 280L476 284L472 288Z" fill="#2e86c6"/>
<path d="M472 287L475 284L479 280L483 277L487 274L491 272L496 269L500 266L503 262L506 258L508 252L509 247L511 242L513 237L516 233L521 230L526 229L532 227L538 227L544 226L550 224L553 221L556 216L557 210L557 203L557 196L557 189L558 183L561 179L566 177L573 177L582 178L590 179L599 190L590 187L582 186L575 186L570 187L566 191L565 196L564 203L564 210L563 217L562 224L559 228L555 231L549 232L543 233L537 233L531 233L525 235L521 237L517 241L515 246L513 251L511 256L508 261L505 265L502 268L497 271L493 274L488 276L484 278L480 281L476 284L472 288Z" fill="#ea5530"/>
<path d="M473 288L476 285L480 282L484 279L488 276L493 273L497 271L502 269L506 266L510 263L514 260L517 256L520 252L523 247L526 243L530 240L534 237L538 234L544 233L549 231L554 230L559 229L564 227L568 223L571 219L573 214L576 209L578 203L580 199L583 195L588 192L593 190L599 190L606 200L600 201L595 202L591 204L587 208L584 212L582 218L579 223L576 228L573 232L569 234L564 236L559 237L553 238L548 239L543 240L538 242L534 245L530 248L527 252L523 256L520 260L516 263L512 267L508 269L503 271L499 273L494 275L490 278L485 280L481 283L477 286L473 289Z" fill="#3d9a5a"/>
<path d="M473 289L478 287L482 284L486 281L490 278L494 275L498 272L503 270L508 269L513 268L518 268L523 267L528 265L533 263L536 259L540 254L543 249L545 244L548 240L552 236L557 234L562 233L569 234L575 236L581 237L587 238L592 237L596 234L599 229L602 222L603 214L605 207L607 201L611 208L608 213L607 220L605 228L602 234L599 239L595 242L589 243L584 242L577 240L571 239L565 238L559 238L555 240L551 243L547 248L544 253L541 258L538 262L534 265L529 268L525 269L519 270L514 270L509 271L504 272L499 274L495 276L490 279L486 282L482 285L478 287L474 290Z" fill="#f09a3c"/>
<path d="M473 290L478 288L483 286L488 285L492 283L497 281L501 278L505 275L509 271L513 268L517 265L522 263L527 262L532 261L538 262L543 262L549 262L554 261L558 259L562 255L566 250L569 245L571 239L574 235L578 231L583 229L589 230L595 231L602 234L608 237L614 238L620 238L624 235L627 244L622 246L617 246L611 244L605 242L598 239L592 236L586 236L582 237L578 241L574 245L571 251L568 256L564 261L560 264L555 266L550 267L545 266L539 266L534 265L528 265L523 266L518 268L514 270L510 273L506 277L502 280L497 282L493 284L488 286L483 287L478 289L474 290Z" fill="#e2412d"/>
<path d="M474 290L478 289L483 287L488 286L493 285L498 284L503 282L507 280L511 277L516 274L520 271L524 268L529 266L534 266L539 266L545 266L550 267L556 268L561 268L566 266L570 263L574 258L577 253L581 248L584 244L588 240L593 239L599 240L605 242L611 245L618 248L623 250L629 250L630 258L625 257L619 255L613 251L607 248L601 246L596 245L591 246L587 249L583 253L579 258L575 263L571 268L567 271L562 272L557 272L551 271L546 270L540 269L535 269L530 269L525 271L521 273L516 276L512 279L508 281L503 284L498 285L493 287L488 287L484 288L479 289L474 290Z" fill="#8a5aa5"/>
<path d="M474 291L479 290L484 289L488 287L493 285L498 283L502 281L507 280L512 279L517 279L522 279L528 280L533 281L538 281L543 280L548 278L552 275L557 271L561 267L565 263L569 260L574 258L579 258L585 260L591 263L596 266L602 269L607 270L612 269L617 266L621 261L625 254L628 248L630 256L626 263L622 269L618 274L613 276L608 277L603 276L598 273L592 269L586 266L581 264L575 264L571 265L566 268L562 272L557 276L553 279L548 282L544 284L539 284L534 284L528 283L523 282L518 281L513 281L508 282L503 283L498 285L493 286L489 288L484 290L479 291L474 291Z" fill="#2e86c6"/>
<path d="M474 291L479 290L484 290L489 290L494 291L499 291L504 291L509 290L514 288L519 285L523 282L528 279L532 278L537 277L543 278L548 280L553 283L559 286L564 288L569 289L574 288L579 285L583 281L588 275L592 270L596 265L601 262L606 262L611 265L617 269L623 275L629 281L634 285L634 293L629 288L624 282L618 276L612 271L607 268L602 268L597 271L593 275L588 280L584 286L579 290L574 293L569 294L564 292L559 290L554 286L549 283L543 281L538 280L533 280L528 282L523 285L519 287L514 290L509 291L504 292L499 292L494 292L489 291L484 291L479 291L474 291Z" fill="#f09a3c"/>
<path d="M474 292L479 292L484 293L489 293L494 292L499 291L504 290L509 288L514 287L519 286L524 285L529 286L534 287L539 290L544 292L549 294L554 295L559 295L564 293L569 290L574 286L579 282L583 279L588 277L593 277L598 279L604 283L609 288L614 292L619 296L624 298L629 297L634 293L633 306L628 309L623 310L618 308L614 303L609 298L604 293L599 289L594 286L589 286L584 287L579 290L574 294L569 297L564 300L558 302L553 302L549 300L544 298L539 295L534 293L529 291L524 290L519 289L514 290L509 291L504 293L499 294L494 294L489 294L484 294L479 293L474 292Z" fill="#e2412d"/></g></g><!--/bands-->
    <g fill="#0e1016" stroke="#0e1016" stroke-linejoin="round" stroke-linecap="round" stroke-width="0.8">
      <path d="M478 297 L495 286 L502 278 L507 281 L500 292 L485 305Z"/>
      <path d="M502 281 L503 271 L507 266 L513 266 L516 271 L511 280 L506 283Z"/>
      <path d="M455 302 L440 309 L424 314 L425 320 L441 316 L456 311Z"/>
      <path d="M425 313 L418 310 L413 315 L415 322 L421 323 L426 320Z"/>
      <path d="M451 301 L465 297 L484 298 L486 324 L489 341 L488 354 L476 356 L468 352 L455 352 L456 335 L453 310Z"/>
      <path d="M459 349 L466 362 L470 371" fill="none" stroke-width="7"/>
      <path d="M481 349 L492 360 L499 369" fill="none" stroke-width="7"/>
      <path d="M466 369 L475 373 M496 368 L505 373" fill="none" stroke-width="4"/>
    </g>
    <path d="M457 320 L463 318 L467 340 L458 345Z" fill="#172450"/>
    <path d="M486 300 L497 290 L500 292 L488 305Z" fill="#1c2a52"/>
    <path d="M462 289 Q466 282 474 284 Q478 288 476 296 L468 298 Q461 296 462 289Z" fill="#b3aca4"/>
    <ellipse cx="471" cy="295" rx="4" ry="5" fill="#d9ccb8"/>
  </g>
</g>

<!-- slider 1 -->
<text class="lbl" x="262" y="264.4" textLength="55.7" lengthAdjust="spacingAndGlyphs">Image strength:</text>
<use href="#help" x="388.5" y="261.5"/>
<text class="mono" x="327.6" y="277" text-anchor="middle" style="font-size:8.3px;fill:#8d90a0;stroke:#8d90a0;stroke-width:0.3px">50</text>
<rect x="261.6" y="283" width="131.5" height="2.4" rx="1.2" fill="#4a5162"/>
<rect x="261.6" y="283" width="65.7" height="2.4" rx="1.2" fill="#a4a4ba"/>
<circle cx="327.3" cy="284.2" r="3.8" fill="#a4a4ba"/>
<text class="mono" x="261.8" y="301" style="font-size:8.3px;fill:#f0f0f2;stroke:#f0f0f2;stroke-width:0.2px">0</text>
<text class="mono" x="393.1" y="301" text-anchor="end" style="font-size:8.3px;fill:#f0f0f2;stroke:#f0f0f2;stroke-width:0.2px">100</text>
<rect x="262.3" y="314.7" width="63.5" height="23.5" rx="4" fill="#252e3d" stroke="#414857" stroke-width="1"/>
<text class="rad" x="269.8" y="329.5" textLength="48.4" lengthAdjust="spacingAndGlyphs">Clear image</text>

<!-- slider 2 -->
<text class="lbl" x="545" y="264.4" textLength="55.7" lengthAdjust="spacingAndGlyphs">Image strength:</text>
<use href="#help" x="671.4" y="261.5"/>
<text class="mono" x="610.5" y="277" text-anchor="middle" style="font-size:8.3px;fill:#8d90a0;stroke:#8d90a0;stroke-width:0.3px">50</text>
<rect x="544.5" y="283" width="131.3" height="2.4" rx="1.2" fill="#4a5162"/>
<rect x="544.5" y="283" width="66" height="2.4" rx="1.2" fill="#a4a4ba"/>
<circle cx="610.5" cy="284.2" r="3.8" fill="#a4a4ba"/>
<text class="mono" x="544.8" y="301" style="font-size:8.3px;fill:#f0f0f2;stroke:#f0f0f2;stroke-width:0.2px">0</text>
<text class="mono" x="675.8" y="301" text-anchor="end" style="font-size:8.3px;fill:#f0f0f2;stroke:#f0f0f2;stroke-width:0.2px">100</text>
<rect x="545" y="315" width="63.5" height="23.5" rx="4" fill="#252e3d" stroke="#414857" stroke-width="1"/>
<text class="rad" x="552.5" y="329.7" textLength="48.4" lengthAdjust="spacingAndGlyphs">Clear image</text>

<!-- switch images -->
<rect x="544.5" y="395.8" width="131" height="22.8" rx="4" fill="#282f3e" stroke="#414857" stroke-width="1"/>
<text class="rad" x="573.5" y="410.3" textLength="59.2" lengthAdjust="spacingAndGlyphs">Switch images</text>
<rect x="634.8" y="400.6" width="12.1" height="11.6" rx="2.2" fill="#8ba3c1"/>
<g fill="none" stroke="#f4f8fc" stroke-width="1.5" stroke-linecap="round">
<path d="M637.6 405.8 Q640.8 402.4 644.2 404.6"/>
<path d="M644 407.6 Q640.8 410.8 637.4 408.6"/>
</g>
<path d="M645.2 402.8 L645.4 406 L642.4 405.2Z M636.4 410.4 L636.2 407.2 L639.2 408Z" fill="#f4f8fc"/>

<!-- number of images -->
<text class="lbl" x="109.8" y="439.5" textLength="110" lengthAdjust="spacingAndGlyphs">Number of images to generate:</text>
<use href="#help" x="388.1" y="436.4"/>
<text class="mono" x="107.8" y="451.2" text-anchor="middle" style="font-size:8.3px;fill:#8d90a0;stroke:#8d90a0;stroke-width:0.3px">4</text>
<rect x="109" y="458" width="283.8" height="2.6" rx="1.3" fill="#4a5162"/>
<circle cx="109" cy="459.2" r="4" fill="#a2a2b8"/>
<text class="mono" x="109" y="476" style="font-size:8.3px;fill:#f0f0f2;stroke:#f0f0f2;stroke-width:0.2px">4</text>
<text class="mono" x="393" y="476" text-anchor="end" style="font-size:8.3px;fill:#f0f0f2;stroke:#f0f0f2;stroke-width:0.2px">100</text>

<!-- generate -->
<rect x="403.5" y="438.9" width="283.8" height="23.9" rx="4.5" fill="#9393ac"/>
<text x="545" y="454" text-anchor="middle" textLength="68.8" lengthAdjust="spacingAndGlyphs" style="font-size:9.8px;font-weight:bold;fill:#f4f4f8">Generate images</text>
</svg>
</body></html>
